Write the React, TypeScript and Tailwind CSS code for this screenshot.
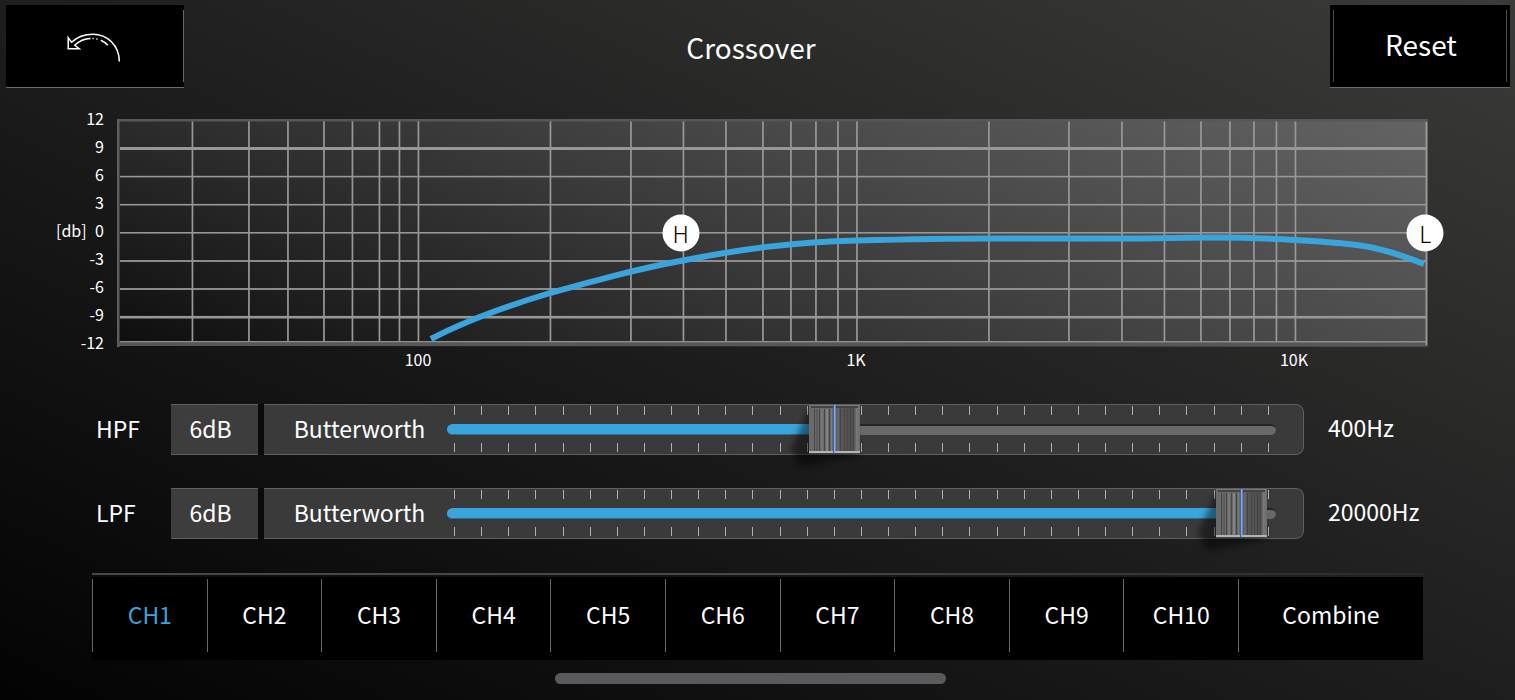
import { useState } from "react";

const FONT = "font-['Noto_Sans_CJK_SC',sans-serif]";

const LEVELS = ["12", "9", "6", "3", "0", "-3", "-6", "-9", "-12"];

const VERTICALS = [
  75.5, 132, 171, 207, 235.5, 262.5, 282.5, 301.5, 433.5, 514, 566.5, 609, 646, 674, 699, 721, 740, 872, 952, 1005,
  1047.5, 1084, 1113, 1137, 1159.5, 1178.5,
];

const HORIZONTALS = [
  { y: 29.5, w: 3 },
  { y: 57.6, w: 1.6 },
  { y: 85.7, w: 1.6 },
  { y: 113.8, w: 1.6 },
  { y: 142, w: 1.8 },
  { y: 170, w: 1.8 },
  { y: 198.2, w: 2.6 },
];

const CURVE =
  "M314 220 C346 203 380 190 433 174 C480 161 520 150 566 141.5 C630 129 680 123 740 121.5 C800 120 840 119.5 872 119.5 L1005 119.5 C1040 119.5 1070 118.5 1100 118.5 C1130 118.5 1160 120 1178 121 C1215 123 1235 124.5 1255 128.500 C1275 133 1291 138.5 1307 145";

const CHANNELS = ["CH1", "CH2", "CH3", "CH4", "CH5", "CH6", "CH7", "CH8", "CH9", "CH10", "Combine"];

const TICKS = Array.from({ length: 31 }, (_, i) => i);

function BackIcon() {
  return (
    <svg width="54" height="30" viewBox="0 0 54 30" fill="none" stroke="#fff" strokeWidth="1.5" aria-hidden="true">
      <path d="M52.3 28.5 C52.3 12 40 1.2 26 1.2 C17 1.2 9.5 4.5 4.6 9.2 L1.2 4.8 V15.8 H12.3 L7.8 12.3 C12 8.3 17 5.8 23.5 5.6" />
      <path d="M25.5 5.6 h1.2 M29.3 6 h1.2 M33.8 7.2 C36.5 8.3 38.8 10 40.8 12.3" />
    </svg>
  );
}

function Ticks() {
  return (
    <div className="flex justify-between">
      {TICKS.map((i) => (
        <span key={i} className="h-[9px] w-px bg-[#b0b0b0]" />
      ))}
    </div>
  );
}

const RIBS = [
  { x: 5, w: 1, c: "#454545" },
  { x: 7, w: 2, c: "#5c5c5c" },
  { x: 10, w: 1, c: "#464646" },
  { x: 12, w: 2, c: "#777" },
  { x: 15, w: 1, c: "#484848" },
  { x: 17, w: 2, c: "#848484" },
  { x: 20, w: 1, c: "#464646" },
  { x: 22, w: 1, c: "#7c7c7c" },
  { x: 28, w: 2, c: "#666" },
  { x: 31, w: 1, c: "#444" },
  { x: 35, w: 1, c: "#444" },
  { x: 38, w: 1, c: "#484848" },
  { x: 41, w: 1, c: "#444" },
  { x: 44, w: 1, c: "#4a4a4a" },
];

function Knob({ id }: { id: string }) {
  return (
    <svg className="block overflow-visible" width="51" height="49" viewBox="0 0 51 49" aria-hidden="true">
      <defs>
        <linearGradient id={`${id}-face`}>
          <stop offset="0" stopColor="#6a6a6a" />
          <stop offset="0.45" stopColor="#686868" />
          <stop offset="0.6" stopColor="#585858" />
          <stop offset="0.88" stopColor="#4e4e4e" />
          <stop offset="0.93" stopColor="#787878" />
          <stop offset="1" stopColor="#6c6c6c" />
        </linearGradient>
        <filter id={`${id}-blur`} x="-50%" y="-50%" width="200%" height="200%">
          <feGaussianBlur stdDeviation="3" />
        </filter>
      </defs>
      <polygon points="0,4 -18,44 -8,62 20,56 50,50 46,20" fill="#000" opacity="0.45" filter={`url(#${id}-blur)`} />
      <rect width="51" height="49" fill={`url(#${id}-face)`} />
      {RIBS.map((r) => (
        <rect key={r.x} x={r.x} y="4" width={r.w} height="42" fill={r.c} />
      ))}
      <rect width="51" height="1" fill="#777" />
      <rect x="2" y="1" width="47" height="2" fill="#444" />
      <rect y="46" width="51" height="2" fill="#b4b4b4" />
      <rect y="48" width="51" height="1" fill="#444" />
      <rect x="24" y="0" width="1" height="48" fill="#3f63a8" />
      <rect x="25" y="0" width="1.5" height="48" fill="#79abff" />
    </svg>
  );
}

function FilterRow({ id, label, initial, value }: { id: string; label: string; initial: number; value: string }) {
  const [pos, setPos] = useState(initial);
  return (
    <div className="flex h-[51px] items-center pl-24 text-[23px]">
      <label htmlFor={id} className="w-[75px] pb-[2px]">
        {label}
      </label>
      <div className="flex h-full flex-1 gap-[6px] rounded-r-lg bg-[#0b0b0b]">
        <button type="button" className="w-[87px] border-y border-[#606060] bg-[#3d3d3d] pr-2 pb-[2px]">
          6dB
        </button>
        <div className="flex flex-1 rounded-r-lg border border-l-0 border-[#606060] bg-[#3a3a3a]">
          <button type="button" className="w-[183px] pb-[2px] pl-2">
            Butterworth
          </button>
          <div className="relative mr-[27px] flex flex-1 flex-col justify-between pt-px pb-[2px]">
            <div className="px-[7px]">
              <Ticks />
            </div>
            <div className="h-[11px] rounded-full border-t-2 border-[#252525] bg-[#69696c]">
              <div
                className="-mt-[2px] h-[11px] rounded-l-full border-b border-[#2a6f94] bg-[#3aa5dc]"
                style={{ width: `calc(${pos / 10}% + ${26 - (pos * 51) / 1000}px)` }}
              />
            </div>
            <div className="px-[7px]">
              <Ticks />
            </div>
            <div
              className="pointer-events-none absolute top-0"
              style={{ left: `calc(${pos / 10}% - ${(pos * 51) / 1000}px)` }}
            >
              <Knob id={id} />
            </div>
            <input
              id={id}
              type="range"
              min={0}
              max={1000}
              value={pos}
              onChange={(e) => setPos(Number(e.target.value))}
              className="absolute inset-0 m-0 h-full w-full cursor-pointer appearance-none bg-transparent [&::-webkit-slider-thumb]:h-12 [&::-webkit-slider-thumb]:w-[51px] [&::-webkit-slider-thumb]:appearance-none [&::-webkit-slider-thumb]:bg-transparent"
            />
          </div>
        </div>
      </div>
      <output htmlFor={id} className="ml-6 w-[187px] pb-1">
        {value}
      </output>
    </div>
  );
}

function Plot() {
  return (
    <div className="relative">
      <svg
        className="block h-[228px] w-full bg-[linear-gradient(to_top,rgba(255,255,255,0),rgba(255,255,255,0.12)),linear-gradient(to_right,#0e0e0e,#2e2e2e_45%,#4e4e4e)]"
        viewBox="0 0 1311 228"
        preserveAspectRatio="none"
        role="img"
        aria-label="Frequency response"
      >
        {VERTICALS.map((x) => (
          <rect key={x} x={x - 0.9} y="2" width="1.7" height="221" fill="#989898" />
        ))}
        {HORIZONTALS.map((l) => (
          <rect key={l.y} x="3" y={l.y - l.w / 2} width="1306" height={l.w} fill="#989798" />
        ))}
        <rect x="0" y="0" width="1311" height="2.5" fill="#575757" />
        <rect x="0" y="0" width="2.5" height="228" fill="#5e5e5e" />
        <rect x="0" y="223.5" width="1311" height="3.5" fill="#575757" />
        <rect x="3" y="222" width="1307" height="1.5" fill="#8f8f8f" />
        <rect x="1308.5" y="3" width="1.7" height="223" fill="#989898" />
        <path d={CURVE} fill="none" stroke="#3aa5dc" strokeWidth="6" />
      </svg>
      <button
        type="button"
        aria-label="High-pass point"
        className="absolute top-1/2 left-[43%] flex size-[37px] -translate-x-1/2 -translate-y-1/2 items-center justify-center rounded-full bg-white text-[23px] font-light text-black"
      >
        H
      </button>
      <button
        type="button"
        aria-label="Low-pass point"
        className="absolute top-1/2 left-[99.8%] flex size-[37px] -translate-x-1/2 -translate-y-1/2 items-center justify-center rounded-full bg-white text-[23px] font-light text-black"
      >
        L
      </button>
    </div>
  );
}

export default function App() {
  const [active, setActive] = useState("CH1");
  return (
    <main
      className={`flex min-h-screen flex-col overflow-hidden bg-[linear-gradient(to_top_right,#030303,#1e1e1e_50%,#3b3b39)] text-white ${FONT}`}
    >
      <header className="flex items-start px-[5px] pt-[5px]">
        <button
          type="button"
          aria-label="Back"
          className="ml-px flex h-[83px] w-[178px] items-center justify-center border-b border-[#6a6a6a] bg-black"
        >
          <span className="flex h-[72px] flex-1 items-center justify-center border-r border-[#6a6a6a] pt-1 pr-[2px]">
            <BackIcon />
          </span>
        </button>
        <h1 className="flex-1 self-center pr-3 text-center text-[28px] leading-[40px]">Crossover</h1>
        <button
          type="button"
          className="flex h-[83px] w-[180px] items-center border-b border-[#6a6a6a] bg-black px-[3px] text-[28px]"
        >
          <span className="flex h-[72px] flex-1 items-center justify-center border-x border-[#4c4c4c] pb-1 pl-[2px]">
            Reset
          </span>
        </button>
      </header>

      <section className="mt-4 flex text-base">
        <div className="w-[104px] shrink-0 pl-14">
          {LEVELS.map((l) => (
            <div key={l} className="flex h-7 items-center justify-end">
              {l === "0" && <span className="mr-auto">[db]</span>}
              <span>{l}</span>
            </div>
          ))}
        </div>
        <div className="ml-[13px] flex-1 pt-[15px]">
          <div className="pr-[87px]">
            <Plot />
          </div>
          <div className="mt-[2px] mb-px grid grid-cols-[82fr_438fr_438fr_438fr] pr-[2px] text-center leading-5">
            <span />
            <span>100</span>
            <span>1K</span>
            <span>10K</span>
          </div>
        </div>
      </section>

      <section className="mt-[34px] flex flex-col gap-[33px]">
        <FilterRow id="hpf" label="HPF" initial={465} value="400Hz" />
        <FilterRow id="lpf" label="LPF" initial={988} value="20000Hz" />
      </section>

      <nav className="mt-[34px] pr-[92px] pl-[92px]">
        <div className="h-[2px] bg-[linear-gradient(to_right,#484848,#484848_50%,#2a2a2a)]" />
        <div className="mt-[2px] grid h-[83px] grid-cols-[repeat(10,1146fr)_1850fr] bg-black pt-[2px] text-[23px]">
          {CHANNELS.map((c) => (
            <button
              key={c}
              type="button"
              onClick={() => setActive(c)}
              className={`h-[73px] border-l border-[#666] pb-[2px] ${c === active ? "text-[#3aa5dc]" : "text-white"}`}
            >
              {c}
            </button>
          ))}
        </div>
      </nav>

      <div className="mt-[13px] mr-[14px] h-[11px] w-[391px] self-center rounded-full bg-[#5a5a5c]" />
    </main>
  );
}
